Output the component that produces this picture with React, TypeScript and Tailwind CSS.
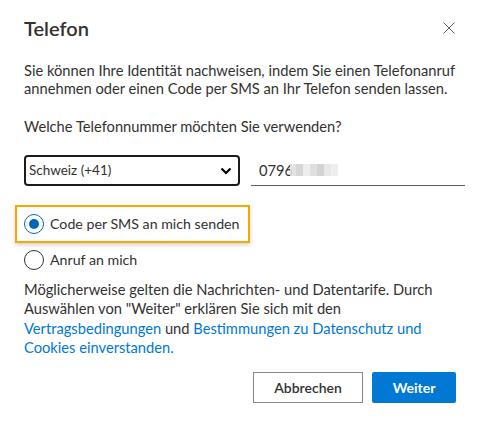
import React, { useState } from 'react';

const font = { fontFamily: 'Lato, "Segoe UI", sans-serif' };

const Radio: React.FC<{ checked: boolean; label: string; onClick: () => void }> = ({ checked, label, onClick }) => (
  <button type="button" onClick={onClick} className="flex h-[20px] items-center gap-[6px] text-left">
    <span
      className={`flex h-[20px] w-[20px] shrink-0 items-center justify-center rounded-full border ${
        checked ? 'border-[#0067b8]' : 'border-[#323130]'
      } bg-white`}
    >
      {checked && <span className="h-[10px] w-[10px] rounded-full bg-[#0067b8]" />}
    </span>
    <span className="whitespace-nowrap text-[14.2px] leading-[20px] text-[#323130]">{label}</span>
  </button>
);

export default function App() {
  const [method, setMethod] = useState<'sms' | 'call'>('sms');

  return (
    <div className="h-[426px] w-[478px] overflow-hidden bg-white text-[#323130]" style={font}>
      <div className="px-[24px] pt-[13px]">
        {/* Header */}
        <div className="flex h-[30px] items-center justify-between">
          <h1 className="text-[20px] font-semibold leading-[30px]">Telefon</h1>
          <button type="button" aria-label="Schliessen" className="-mr-[1px] text-[#605e5c]">
            <svg width="12" height="12" viewBox="0 0 12 12" fill="none" stroke="currentColor" strokeWidth="1">
              <path d="M0.5 0.5l11 11M11.5 0.5l-11 11" />
            </svg>
          </button>
        </div>

        <p className="mt-[18px] whitespace-nowrap text-[14.7px] leading-[18px]">
          Sie können Ihre Identität nachweisen, indem Sie einen Telefonanruf
          <br />
          annehmen oder einen Code per SMS an Ihr Telefon senden lassen.
        </p>

        <p className="mt-[20px] text-[14.7px] leading-[19px]">Welche Telefonnummer möchten Sie verwenden?</p>

        {/* Country + number */}
        <div className="mt-[19px] -mr-[11px] flex items-start gap-[11px]">
          <div className="flex h-[31px] w-[216px] shrink-0 items-center justify-between rounded-[4px] border-2 border-[#1b1b1b] pl-[3px] pr-[6px]">
            <span className="text-[13.5px]">Schweiz (+41)</span>
            <svg width="12" height="8" viewBox="0 0 12 8" fill="none" stroke="#000" strokeWidth="2.2">
              <path d="M1.5 1.5l4.5 4.5 4.5-4.5" />
            </svg>
          </div>
          <div className="flex h-[31px] w-[214px] shrink-0 items-center border-b border-[#605e5c] pl-[8px]">
            <span className="text-[14.7px] text-[#323130]">0796</span>
            <span className="-ml-[3px] flex h-[12px] w-[48px] opacity-90">
              <span className="w-[6px] bg-[#e1e1e1]" />
              <span className="w-[7px] bg-[#d2d2d2]" />
              <span className="w-[7px] bg-[#ececec]" />
              <span className="w-[7px] bg-[#dcdcdc]" />
              <span className="w-[7px] bg-[#cfcfcf]" />
              <span className="w-[7px] bg-[#e6e6e6]" />
              <span className="w-[7px] bg-[#ededed]" />
            </span>
          </div>
        </div>

        {/* Options */}
        <div className="mt-[19px] flex flex-col gap-[7px]">
          <div className="-ml-[9px] h-[38px] w-[235px] border-2 border-[#f7a800] pt-[7px] pl-[7px] shadow-[0_2px_4px_rgba(0,0,0,0.18)]">
            <Radio checked={method === 'sms'} label="Code per SMS an mich senden" onClick={() => setMethod('sms')} />
          </div>
          <div>
            <Radio checked={method === 'call'} label="Anruf an mich" onClick={() => setMethod('call')} />
          </div>
        </div>

        <p className="mt-[10px] whitespace-nowrap text-[14.7px] leading-[19.3px]">
          Möglicherweise gelten die Nachrichten- und Datentarife. Durch
          <br />
          Auswählen von "Weiter" erklären Sie sich mit den
          <br />
          <a href="#" className="text-[#0078d4]">
            Vertragsbedingungen
          </a>{' '}
          und{' '}
          <a href="#" className="text-[#0078d4]">
            Bestimmungen zu Datenschutz und
            <br />
            Cookies einverstanden.
          </a>
        </p>

        {/* Actions */}
        <div className="mt-[15px] -mr-[2px] flex justify-end gap-[9px]">
          <button
            type="button"
            className="h-[31px] w-[110px] border border-[#8a8886] bg-white text-[14px] font-semibold text-[#323130]"
          >
            Abbrechen
          </button>
          <button type="button" className="h-[31px] w-[84px] rounded-[2px] bg-[#0078d4] text-[14px] font-bold text-white">
            Weiter
          </button>
        </div>
      </div>
    </div>
  );
}
